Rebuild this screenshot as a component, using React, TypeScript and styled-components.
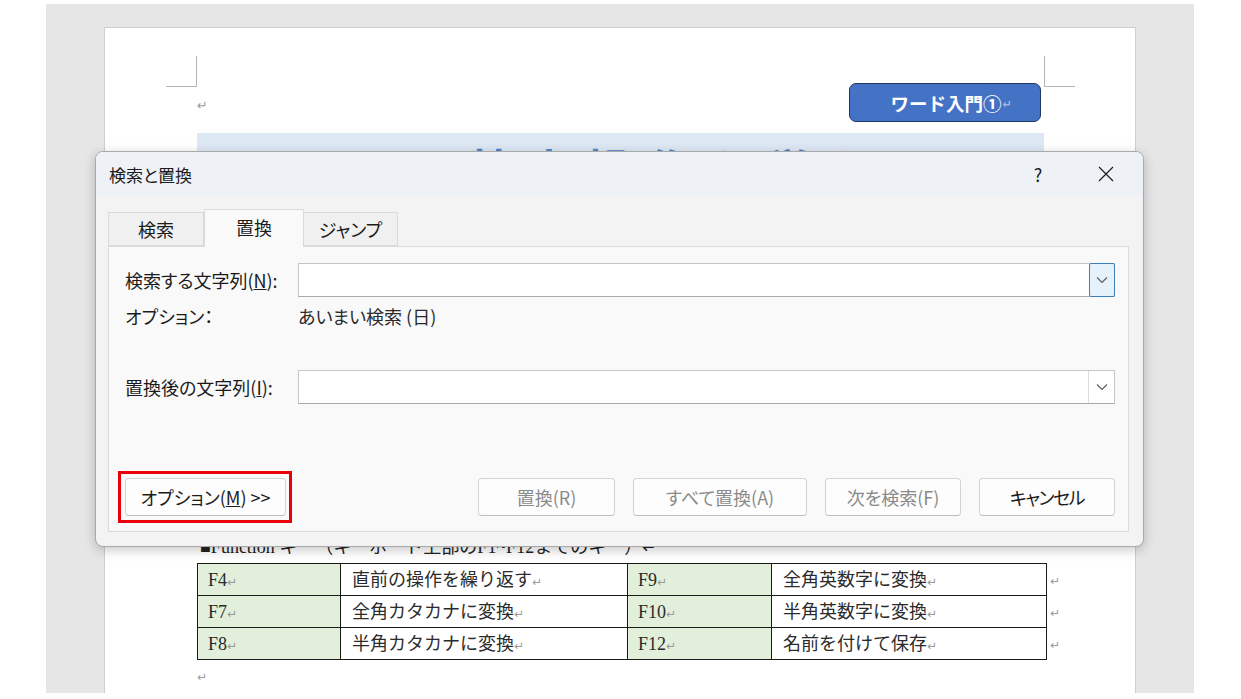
import React from "react";
import styled, { createGlobalStyle } from "styled-components";

const GlobalStyle = createGlobalStyle`
  html, body { margin: 0; padding: 0; background: #ffffff; }
  body { font-family: "Noto Sans CJK JP", "Noto Sans", sans-serif; }
  * { box-sizing: border-box; }
`;

const UI = `"Noto Sans CJK JP", "Noto Sans", sans-serif`;
const DOC = `"Liberation Serif", "Noto Sans CJK JP", serif`;

const Screen = styled.div`
  position: relative;
  width: 1241px;
  height: 699px;
  padding: 4px 0 0 46px;
  overflow: hidden;
`;

const Workspace = styled.div`
  width: 1148px;
  height: 689px;
  background: #e6e6e6;
  padding: 23px 58px 0 58px;
`;

const Page = styled.div`
  position: relative;
  height: 100%;
  background: #ffffff;
  border: 1px solid #cfcfcf;
  border-bottom: none;
  padding-top: 28px;
`;

const CornerRow = styled.div`
  display: flex;
  justify-content: space-between;
  padding: 0 60px 0 61px;
`;

const CornerMark = styled.div<{ $side: "left" | "right" }>`
  width: 31px;
  height: 31px;
  border-bottom: 1px solid #b5b5b5;
  ${(p) =>
    p.$side === "left"
      ? "border-right: 1px solid #b5b5b5;"
      : "border-left: 1px solid #b5b5b5;"}
`;

const Para = styled.div<{ $top?: number }>`
  margin-left: 92px;
  margin-top: ${(p) => p.$top ?? 0}px;
  height: 20px;
  display: flex;
  align-items: center;
`;

const ReturnMark = styled.span<{ $size?: number }>`
  font-family: "DejaVu Sans", sans-serif;
  font-size: ${(p) => p.$size ?? 12}px;
  color: #9a9a9a;
  line-height: 1;
`;

const Badge = styled.div`
  position: absolute;
  left: 744px;
  top: 55px;
  width: 192px;
  height: 39px;
  background: #4472c4;
  border: 1.5px solid #1f3763;
  border-radius: 7px;
  display: flex;
  align-items: center;
  justify-content: center;
  gap: 1px;
  padding-left: 12px;
  color: #ffffff;
  font-family: ${UI};
  font-weight: 700;
  font-size: 18.5px;
`;

const BadgeReturn = styled.span`
  font-family: "DejaVu Sans", sans-serif;
  font-size: 11px;
  color: #aab8d8;
  margin-top: 4px;
`;

const HeadingBand = styled.div`
  margin: 18px 0 0 92px;
  width: 847px;
  height: 80px;
  background: #dde8f4;
  padding: 7px 0 0 30px;
  font-family: ${UI};
  font-weight: 700;
  font-size: 44px;
  line-height: 56px;
  color: #4f86cc;
  letter-spacing: 16px;
  white-space: nowrap;
`;

const FunctionLine = styled.div`
  margin: 323px 0 0 95px;
  height: 27px;
  font-family: ${DOC};
  font-size: 18px;
  line-height: 22px;
  color: #222;
  white-space: nowrap;
`;

const KeyTable = styled.table`
  margin-left: 92px;
  border-collapse: collapse;
  font-family: ${DOC};
  font-size: 18px;
  color: #2b2b2b;
`;

const Cell = styled.td<{ $key?: boolean; $w: number }>`
  width: ${(p) => p.$w}px;
  height: 32px;
  padding: 0 0 0 ${(p) => (p.$key ? 10 : 11)}px;
  border: 1px solid #1a1a1a;
  background: ${(p) => (p.$key ? "#e2efda" : "#ffffff")};
  line-height: 1;
  white-space: nowrap;
`;

const EndCell = styled.td`
  border: none;
  padding: 0 0 0 3px;
`;

const CellReturn = styled.span`
  font-family: "DejaVu Sans", sans-serif;
  font-size: 12px;
  color: #9a9a9a;
`;

/* ---------------- Dialog ---------------- */

const Dialog = styled.div`
  position: absolute;
  left: 95px;
  top: 151px;
  width: 1049px;
  height: 396px;
  background: #f3f3f3;
  border: 1px solid #a9a9a9;
  border-radius: 8px;
  box-shadow: 0 3px 12px rgba(0, 0, 0, 0.22);
  overflow: hidden;
  display: flex;
  flex-direction: column;
  font-family: ${UI};
  font-feature-settings: "palt";
  color: #1b1b1b;
`;

const TitleBar = styled.div`
  height: 44px;
  flex: none;
  background: #eef2f7;
  display: flex;
  align-items: center;
  padding: 0 14px 0 13px;
`;

const TitleText = styled.div`
  flex: 1;
  font-size: 17px;
`;

const TitleButton = styled.div`
  width: 46px;
  height: 30px;
  display: flex;
  align-items: center;
  justify-content: center;
  font-size: 18px;
  color: #1b1b1b;
  & + & { margin-left: 22px; }
`;

const Body = styled.div`
  flex: 1;
  display: flex;
  flex-direction: column;
  padding: 13px 14px 14px 12px;
`;

const TabRow = styled.div`
  display: flex;
  align-items: flex-end;
  height: 37px;
  flex: none;
`;

const Tab = styled.div<{ $active?: boolean; $w: number }>`
  width: ${(p) => p.$w}px;
  height: ${(p) => (p.$active ? 38 : 34)}px;
  margin-bottom: ${(p) => (p.$active ? -1 : 0)}px;
  position: relative;
  z-index: ${(p) => (p.$active ? 1 : 0)};
  background: ${(p) => (p.$active ? "#f9f9f9" : "#f0f0f0")};
  border: 1px solid #dadada;
  border-bottom: ${(p) => (p.$active ? "none" : "1px solid #dadada")};
  ${(p) => (p.$active ? "" : "border-left: none;")}
  &:first-child { border-left: 1px solid #dadada; }
  display: flex;
  align-items: center;
  justify-content: center;
  font-size: 18px;
  padding-bottom: ${(p) => (p.$active ? 3 : 0)}px;
`;

const Panel = styled.div`
  flex: 1;
  background: #f9f9f9;
  border: 1px solid #dadada;
  padding: 16px 13px 0 16px;
  display: flex;
  flex-direction: column;
`;

const FieldRow = styled.div<{ $top?: number }>`
  display: flex;
  align-items: center;
  height: 34px;
  margin-top: ${(p) => p.$top ?? 0}px;
`;

const Label = styled.div`
  width: 173px;
  flex: none;
  font-size: 18px;
  white-space: nowrap;
`;

const Combo = styled.div`
  flex: 1;
  height: 34px;
  display: flex;
  background: #ffffff;
  border: 1px solid #c6c6c6;
  border-bottom-color: #a9a9a9;
`;

const ComboInput = styled.div`
  flex: 1;
`;

const DropButton = styled.div<{ $focused?: boolean }>`
  width: 26px;
  margin: ${(p) => (p.$focused ? "-1px -1px -1px 0" : "0")};
  display: flex;
  align-items: center;
  justify-content: center;
  background: ${(p) => (p.$focused ? "#e5f1fb" : "#ffffff")};
  border: ${(p) => (p.$focused ? "1px solid #3d80b8" : "none")};
  border-left: 1px solid ${(p) => (p.$focused ? "#3d80b8" : "#dcdcdc")};
  border-radius: ${(p) => (p.$focused ? "2px" : "0")};
`;

const OptionRow = styled.div`
  display: flex;
  align-items: center;
  height: 22px;
  margin-top: 8px;
`;

const OptionValue = styled.div`
  font-size: 18px;
  color: #2a2a2a;
`;

const ButtonRow = styled.div`
  display: flex;
  align-items: center;
  margin-top: 74px;
  height: 38px;
`;

const Highlight = styled.div`
  margin: -7px 0 -7px -7px;
  padding: 4px 3px 4px 4px;
  border: 3px solid #e8000b;
`;

const ActionGroup = styled.div`
  margin-left: auto;
  display: flex;
  gap: 18px;
`;

const Button = styled.div<{ $w: number; $disabled?: boolean; $tight?: boolean }>`
  width: ${(p) => p.$w}px;
  height: 38px;
  display: flex;
  align-items: center;
  justify-content: center;
  background: #fdfdfd;
  border: 1px solid #d3d3d3;
  border-bottom-color: #bdbdbd;
  border-radius: 4px;
  font-size: 18px;
  letter-spacing: ${(p) => (p.$tight ? "-1.5px" : "0")};
  color: ${(p) => (p.$disabled ? "#8a8a8a" : "#1b1b1b")};
  white-space: nowrap;
`;

const Chevron = () => (
  <svg width="12" height="8" viewBox="0 0 12 8">
    <path d="M1 1.5 L6 6.5 L11 1.5" fill="none" stroke="#5a5a5a" strokeWidth="1.1" />
  </svg>
);

const CloseIcon = () => (
  <svg width="16" height="16" viewBox="0 0 16 16">
    <path d="M1 1 L15 15 M15 1 L1 15" stroke="#1b1b1b" strokeWidth="1.2" />
  </svg>
);

const rows = [
  ["F4", "直前の操作を繰り返す", "F9", "全角英数字に変換"],
  ["F7", "全角カタカナに変換", "F10", "半角英数字に変換"],
  ["F8", "半角カタカナに変換", "F12", "名前を付けて保存"],
];

export default function App() {
  return (
    <>
      <GlobalStyle />
      <Screen>
        <Workspace>
          <Page>
            <CornerRow>
              <CornerMark $side="left" />
              <CornerMark $side="right" />
            </CornerRow>
            <Para $top={8}>
              <ReturnMark $size={13}>↵</ReturnMark>
            </Para>
            <Badge>
              ワード入門①<BadgeReturn>↵</BadgeReturn>
            </Badge>
            <HeadingBand>ワードの基本操作を覚えよう</HeadingBand>
            <FunctionLine>
              ■Function キー（キーボード上部のF1~F12までのキー）↵
            </FunctionLine>
            <KeyTable>
              <tbody>
                {rows.map((r) => (
                  <tr key={r[0]}>
                    <Cell $key $w={143}>
                      {r[0]}
                      <CellReturn>↵</CellReturn>
                    </Cell>
                    <Cell $w={287}>
                      {r[1]}
                      <CellReturn>↵</CellReturn>
                    </Cell>
                    <Cell $key $w={144}>
                      {r[2]}
                      <CellReturn>↵</CellReturn>
                    </Cell>
                    <Cell $w={275}>
                      {r[3]}
                      <CellReturn>↵</CellReturn>
                    </Cell>
                    <EndCell>
                      <CellReturn>↵</CellReturn>
                    </EndCell>
                  </tr>
                ))}
              </tbody>
            </KeyTable>
            <Para $top={7}>
              <ReturnMark $size={12}>↵</ReturnMark>
            </Para>
          </Page>
        </Workspace>

        <Dialog>
          <TitleBar>
            <TitleText>検索と置換</TitleText>
            <TitleButton>?</TitleButton>
            <TitleButton>
              <CloseIcon />
            </TitleButton>
          </TitleBar>
          <Body>
            <TabRow>
              <Tab $w={96}>検索</Tab>
              <Tab $w={100} $active>
                置換
              </Tab>
              <Tab $w={94}>ジャンプ</Tab>
            </TabRow>
            <Panel>
              <FieldRow>
                <Label>
                  検索する文字列(<u>N</u>):
                </Label>
                <Combo>
                  <ComboInput />
                  <DropButton $focused>
                    <Chevron />
                  </DropButton>
                </Combo>
              </FieldRow>
              <OptionRow>
                <Label>オプション：</Label>
                <OptionValue>あいまい検索 (日)</OptionValue>
              </OptionRow>
              <FieldRow $top={43}>
                <Label>
                  置換後の文字列(<u>I</u>):
                </Label>
                <Combo>
                  <ComboInput />
                  <DropButton>
                    <Chevron />
                  </DropButton>
                </Combo>
              </FieldRow>
              <ButtonRow>
                <Highlight>
                  <Button $w={161}>
                    オプション(<u>M</u>)&nbsp;&gt;&gt;
                  </Button>
                </Highlight>
                <ActionGroup>
                  <Button $w={137} $disabled>
                    置換(R)
                  </Button>
                  <Button $w={174} $disabled>
                    すべて置換(A)
                  </Button>
                  <Button $w={136} $disabled>
                    次を検索(F)
                  </Button>
                  <Button $w={136} $tight>
                    キャンセル
                  </Button>
                </ActionGroup>
              </ButtonRow>
            </Panel>
          </Body>
        </Dialog>
      </Screen>
    </>
  );
}
